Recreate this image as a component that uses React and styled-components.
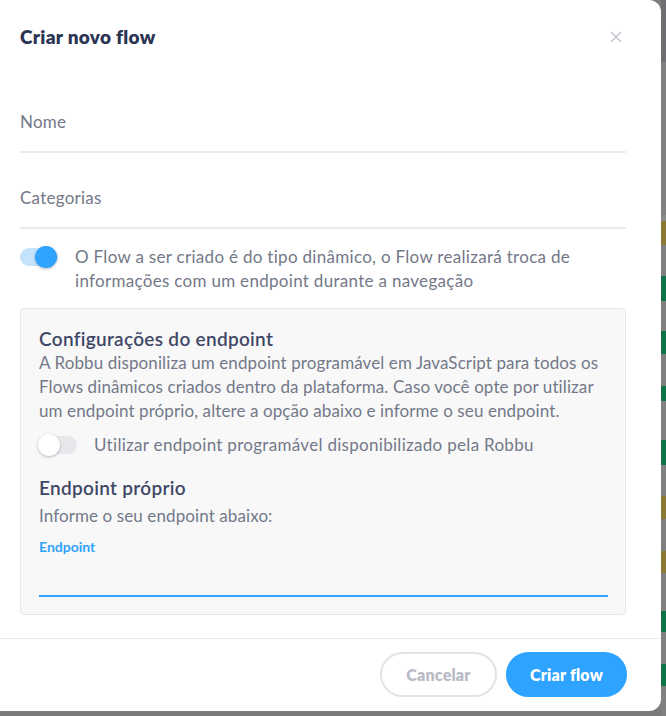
import React from 'react';
import styled, { createGlobalStyle } from 'styled-components';

const GlobalStyle = createGlobalStyle`
  body {
    margin: 0;
    background: #7b7b7c;
    font-family: Lato, "Liberation Sans", sans-serif;
  }
`;

/* STYLES */

const Page = styled.div`
  display: flex;
  width: 666px;
  height: 716px;
  overflow: hidden;
`;

const Modal = styled.div`
  width: 661px;
  height: 711px;
  flex-shrink: 0;
  background: #ffffff;
  border-radius: 0 12px 12px 0;
  display: flex;
  flex-direction: column;
`;

const Strip = styled.div`
  flex: 1;
  display: flex;
  flex-direction: column;
`;

const StripPart = styled.div`
  height: ${props => props.h}px;
  background: ${props => props.color};
`;

const Header = styled.div`
  display: flex;
  align-items: center;
  justify-content: space-between;
  padding: 26px 39px 0 20px;
  height: 22px;
`;

const Title = styled.h2`
  margin: 0;
  font-size: 19px;
  line-height: 22px;
  font-weight: 800;
  color: #2b3453;
  letter-spacing: 0.3px;
`;

const Close = styled.button`
  border: none;
  background: none;
  padding: 0;
  width: 12px;
  height: 12px;
  display: flex;
  cursor: pointer;
`;

const Body = styled.div`
  padding: 62px 35px 0 20px;
  flex: 1;
`;

const Field = styled.div`
  height: 41px;
  border-bottom: 2px solid #ebecf1;
  margin-bottom: ${props => props.gap}px;
  font-size: 17px;
  line-height: 24px;
  letter-spacing: 0.25px;
  color: #737888;
`;

const SwitchRow = styled.div`
  display: flex;
  align-items: flex-start;
  gap: ${props => props.gap}px;
  margin-top: ${props => props.top || 0}px;
  font-size: 17px;
  line-height: 24px;
  letter-spacing: 0.3px;
  color: #737888;
`;

const Track = styled.div`
  position: relative;
  flex-shrink: 0;
  width: 38px;
  height: 18px;
  margin-top: 3px;
  border-radius: 9px;
  background: ${props => props.on ? '#c4e4fd' : '#e7e8ec'};
`;

const Knob = styled.div`
  position: absolute;
  top: -2px;
  left: ${props => props.on ? '15px' : '-1px'};
  width: 22px;
  height: 22px;
  border-radius: 50%;
  background: ${props => props.on ? '#2ea3ff' : '#ffffff'};
  box-shadow: 0 1px 3px rgba(0, 0, 0, 0.28);
`;

const ConfigBox = styled.div`
  margin-top: 15px;
  border: 1px solid #e6e7eb;
  border-radius: 4px;
  background: #f8f8f9;
  padding: 18px 17px 17px 18px;
`;

const BoxTitle = styled.h3`
  margin: ${props => props.top || 0}px 0 0;
  font-size: 19px;
  line-height: 24px;
  font-weight: 600;
  letter-spacing: 0.3px;
  color: #3f4766;
`;

const Text = styled.p`
  margin: ${props => props.top || 0}px 0 0;
  font-size: 17px;
  line-height: 24px;
  letter-spacing: 0.1px;
  color: #737888;
`;

const InputLabel = styled.label`
  display: block;
  margin-top: 11px;
  font-size: 14px;
  line-height: 16px;
  font-weight: 700;
  color: #2ea3ff;
`;

const Input = styled.input`
  display: block;
  width: 100%;
  box-sizing: border-box;
  margin-top: 18px;
  height: 24px;
  border: none;
  border-bottom: 2px solid #2ea3ff;
  background: transparent;
  outline: none;
  font: inherit;
`;

const Footer = styled.div`
  border-top: 1px solid #ececef;
  padding: 13px 34px 14px 0;
  display: flex;
  justify-content: flex-end;
  gap: 9px;
`;

const Button = styled.button`
  height: 45px;
  width: ${props => props.w}px;
  border-radius: 23px;
  font-family: Lato, "Liberation Sans", sans-serif;
  font-size: 16px;
  font-weight: 800;
  letter-spacing: 0.2px;
  cursor: pointer;
  border: 2px solid ${props => props.primary ? '#2ea3ff' : '#e2e3e8'};
  background: ${props => props.primary ? '#2ea3ff' : '#ffffff'};
  color: ${props => props.primary ? '#ffffff' : '#b8bbc6'};
`;

// Page behind the modal, only its right edge shows
const stripe = [
  [63, '#6f6f73'], [155, '#808080'], [6, '#8a8a8a'], [24, '#8a7835'], [32, '#808080'],
  [25, '#0e7448'], [31, '#808080'], [23, '#0e7448'], [32, '#808080'], [16, '#0e7448'],
  [39, '#808080'], [25, '#0e7448'], [32, '#808080'], [23, '#8a7835'], [33, '#808080'],
  [22, '#8a7835'], [38, '#808080'], [22, '#0e7448'], [32, '#808080'], [23, '#0e7448'],
  [30, '#808080'],
];

function App() {
    return (
        <Page>
            <GlobalStyle/>
            <Modal>
                <Header>
                    <Title>Criar novo flow</Title>
                    <Close aria-label="Fechar">
                        <svg width="12" height="12" viewBox="0 0 12 12">
                            <path d="M1 1L11 11M11 1L1 11" stroke="#c3c6d0" strokeWidth="1.5"/>
                        </svg>
                    </Close>
                </Header>
                <Body>
                    <Field gap={33}>Nome</Field>
                    <Field gap={16}>Categorias</Field>
                    <SwitchRow gap={17}>
                        <Track on><Knob on/></Track>
                        <span>O Flow a ser criado é do tipo dinâmico, o Flow realizará troca de informações com um endpoint durante a navegação</span>
                    </SwitchRow>
                    <ConfigBox>
                        <BoxTitle>Configurações do endpoint</BoxTitle>
                        <Text>A Robbu disponiliza um endpoint programável em JavaScript para todos os Flows dinâmicos criados dentro da plataforma. Caso você opte por utilizar um endpoint próprio, altere a opção abaixo e informe o seu endpoint.</Text>
                        <SwitchRow gap={17} top={10}>
                            <Track><Knob/></Track>
                            <span>Utilizar endpoint programável disponibilizado pela Robbu</span>
                        </SwitchRow>
                        <BoxTitle top={19}>Endpoint próprio</BoxTitle>
                        <Text top={4}>Informe o seu endpoint abaixo:</Text>
                        <InputLabel>Endpoint</InputLabel>
                        <Input/>
                    </ConfigBox>
                </Body>
                <Footer>
                    <Button w={117}>Cancelar</Button>
                    <Button w={121} primary>Criar flow</Button>
                </Footer>
            </Modal>
            <Strip>
                {stripe.map(([h, c], i) => <StripPart key={i} h={h} color={c}/>)}
            </Strip>
        </Page>
    );
}

export default App;
